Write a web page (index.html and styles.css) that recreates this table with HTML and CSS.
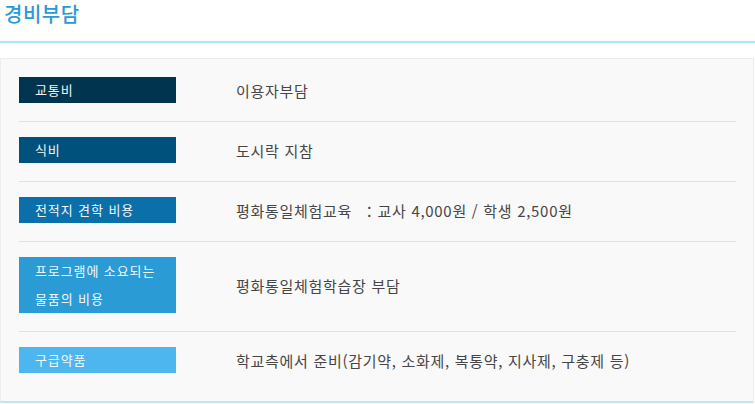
FILE: index.html
```html
<!DOCTYPE html>
<html lang="ko">
<head>
<meta charset="utf-8">
<title>경비부담</title>
<link rel="stylesheet" href="styles.css">
</head>
<body>
<div class="page">
  <h2 class="title">경비부담</h2>
  <div class="box">
    <div class="row first">
      <div class="label c1">교통비</div>
      <div class="value">이용자부담</div>
    </div>
    <div class="row">
      <div class="label c2">식비</div>
      <div class="value">도시락 지참</div>
    </div>
    <div class="row">
      <div class="label c3">전적지 견학 비용</div>
      <div class="value">평화통일체험교육 &nbsp;：교사 4,000원 / 학생 2,500원</div>
    </div>
    <div class="row">
      <div class="label c4 tall">프로그램에 소요되는<br>물품의 비용</div>
      <div class="value">평화통일체험학습장 부담</div>
    </div>
    <div class="row last">
      <div class="label c5">구급약품</div>
      <div class="value">학교측에서 준비(감기약, 소화제, 복통약, 지사제, 구충제 등)</div>
    </div>
  </div>
</div>
</body>
</html>
```

FILE: styles.css
```css
* { box-sizing: border-box; }
html, body { margin: 0; padding: 0; background: #fff; }
body {
  font-family: "Noto Sans CJK KR", "Noto Sans", sans-serif;
  width: 755px;
  height: 404px;
  overflow: hidden;
}
.title {
  margin: 0;
  height: 43px;
  padding: 0 0 0 4px;
  font-size: 20px;
  letter-spacing: 0.5px;
  line-height: 27px;
  font-weight: 500;
  color: #2b98d8;
  border-bottom: 2px solid #ade5f8;
}
.box {
  margin-top: 15px;
  width: 754px;
  background: #f9f9f9;
  border: 1px solid #ededed;
  border-bottom: 2px solid #bde6f9;
  padding: 0 17px 0 18px;
}
.row {
  display: flex;
  align-items: center;
  padding: 15px 0 18px;
  border-bottom: 1px solid #e1e1e1;
}
.row.first { padding-top: 18px; }
.row.last { border-bottom: none; padding-bottom: 28px; }
.label {
  width: 157px;
  height: 26px;
  flex: none;
  padding-left: 16px;
  font-size: 13px;
  letter-spacing: 0.9px;
  line-height: 26px;
  color: #f2f6f9;
  white-space: nowrap;
}
.label.tall { height: 56px; line-height: 28px; }
.c1 { background: #00344f; }
.c2 { background: #00527c; }
.c3 { background: #0b6fa9; }
.c4 { background: #2b9bd6; }
.c5 { background: #4db6ef; }
.value {
  margin-left: 60px;
  font-size: 15px;
  color: #464646;
  letter-spacing: 0.7px;
  white-space: nowrap;
}
```
